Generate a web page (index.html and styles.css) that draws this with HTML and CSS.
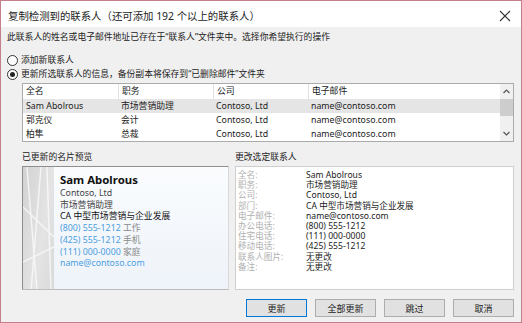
FILE: index.html
```html
<!DOCTYPE html>
<html lang="zh-CN">
<head>
<title>复制检测到的联系人</title>
<meta charset="utf-8">
<link rel="stylesheet" href="styles.css">
</head>
<body>

<div class="dialog">
  <header class="titlebar">
    <span class="title">复制检测到的联系人（还可添加 192 个以上的联系人）</span>
    <svg class="close" width="12" height="12" viewBox="0 0 12 12"><path d="M1 1 L11 11 M11 1 L1 11" stroke="#333" stroke-width="1.1" fill="none"/></svg>
  </header>

  <section class="content">
    <p class="intro">此联系人的姓名或电子邮件地址已存在于“联系人”文件夹中。选择你希望执行的操作</p>

    <label class="radio"><span class="dot"></span>添加新联系人</label>
    <label class="radio checked"><span class="dot"></span>更新所选联系人的信息，备份副本将保存到“已删除邮件”文件夹</label>

    <div class="list">
      <div class="rows">
        <div class="row head">
          <span>全名</span><span>职务</span><span>公司</span><span>电子邮件</span>
        </div>
        <div class="row selected">
          <span>Sam Abolrous</span><span>市场营销助理</span><span>Contoso, Ltd</span><span>name@contoso.com</span>
        </div>
        <div class="row">
          <span>郭克仪</span><span>会计</span><span>Contoso, Ltd</span><span>name@contoso.com</span>
        </div>
        <div class="row">
          <span>柏隼</span><span>总裁</span><span>Contoso, Ltd</span><span>name@contoso.com</span>
        </div>
      </div>
      <div class="scrollbar">
        <svg width="13" height="14" viewBox="0 0 13 14"><path d="M3.5 9 L6.5 6 L9.5 9" stroke="#555" stroke-width="1.2" fill="none"/></svg>
        <div class="thumb"></div>
        <div class="track"></div>
        <svg width="13" height="14" viewBox="0 0 13 14"><path d="M3.5 5 L6.5 8 L9.5 5" stroke="#555" stroke-width="1.2" fill="none"/></svg>
      </div>
    </div>

    <div class="panes">
      <div class="pane">
        <div class="pane-label">已更新的名片预览</div>
        <div class="card">
          <div class="strip">
            <svg width="31" height="124" viewBox="0 0 31 124">
              <path d="M4 0 L14 124 M18 0 L8 124 M0 40 L31 70 M0 95 L31 80 M24 0 L28 124" stroke="#fafafa" stroke-width="1.5" fill="none" opacity="0.8"/>
            </svg>
          </div>
          <div class="card-body">
            <div class="name">Sam Abolrous</div>
            <div>Contoso, Ltd</div>
            <div>市场营销助理</div>
            <div class="dark">CA 中型市场营销与企业发展</div>
            <div><span class="blue">(800) 555-1212</span> <span class="muted">工作</span></div>
            <div><span class="blue">(425) 555-1212</span> <span class="muted">手机</span></div>
            <div><span class="blue">(111) 000-0000</span> <span class="muted">家庭</span></div>
            <div class="blue">name@contoso.com</div>
          </div>
        </div>
      </div>

      <div class="pane">
        <div class="pane-label">更改选定联系人</div>
        <div class="fields">
          <span class="key">全名:</span><span>Sam Abolrous</span>
          <span class="key">职务:</span><span>市场营销助理</span>
          <span class="key">公司:</span><span>Contoso, Ltd</span>
          <span class="key">部门:</span><span>CA 中型市场营销与企业发展</span>
          <span class="key">电子邮件:</span><span>name@contoso.com</span>
          <span class="key">办公电话:</span><span>(800) 555-1212</span>
          <span class="key">住宅电话:</span><span>(111) 000-0000</span>
          <span class="key">移动电话:</span><span>(425) 555-1212</span>
          <span class="key">联系人图片:</span><span>无更改</span>
          <span class="key">备注:</span><span>无更改</span>
        </div>
      </div>
    </div>

    <footer class="buttons">
      <button class="default">更新</button>
      <button>全部更新</button>
      <button>跳过</button>
      <button>取消</button>
    </footer>
  </section>
</div>

</body>
</html>
```

FILE: styles.css
```css
* {
  box-sizing: border-box;
}

body {
  margin: 0;
  font-family: "Noto Sans", "Noto Sans CJK SC", sans-serif;
  color: #222;
}

/* Window frame */
.dialog {
  width: 522px;
  height: 323px;
  border: 1px solid #c4808a;
  background: #f0f0f0;
  display: flex;
  flex-direction: column;
}

.titlebar {
  height: 26px;
  flex: none;
  background: #fff;
  display: flex;
  align-items: center;
  justify-content: space-between;
  padding: 3px 10px 0 7px;
}

.title {
  font-size: 10.4px;
  color: #222;
}

.content {
  padding: 0 7px 0 6px;
  font-size: 8.8px;
}

.intro {
  margin: 3px 0 0 0;
  line-height: 15px;
  color: #222;
}

/* Radio buttons */
.radio {
  display: flex;
  align-items: center;
  height: 14px;
  line-height: 14px;
  color: #222;
}

.radio:first-of-type {
  margin-top: 8px;
}

.dot {
  width: 11px;
  height: 11px;
  border: 1px solid #333;
  border-radius: 50%;
  background: #fff;
  margin-right: 3px;
  position: relative;
}

.checked .dot:after {
  content: "";
  position: absolute;
  left: 2px;
  top: 2px;
  width: 5px;
  height: 5px;
  border-radius: 50%;
  background: #222;
}

/* Contact list */
.list {
  margin: 2px 0 0 15px;
  height: 59px;
  border: 1px solid #ababab;
  background: #fff;
  display: flex;
}

.rows {
  flex: 1;
}

.row {
  display: grid;
  grid-template-columns: 95px 95px 95px 1fr;
  height: 14px;
  line-height: 14px;
  color: #222;
}

.row span {
  padding-left: 3px;
  white-space: nowrap;
  overflow: hidden;
}

.row.head {
  height: 15px;
  line-height: 15px;
}

.row.head span + span {
  border-left: 1px solid #e2e2e2;
}

.row.selected {
  background: #e5e5e5;
}

.scrollbar {
  width: 13px;
  background: #f0f0f0;
  display: flex;
  flex-direction: column;
}

.thumb {
  height: 17px;
  margin: 1px 0;
  background: #cdcdcd;
}

.track {
  flex: 1;
}

/* Preview panes */
.panes {
  display: grid;
  grid-template-columns: 207px 1fr;
  gap: 6px;
  margin: 8px 0 0 15px;
}

.pane-label {
  height: 15px;
  line-height: 15px;
  color: #222;
}

.card {
  margin-top: 1px;
  height: 124px;
  border: 1px solid #8e8e8e;
  border-right-color: #d8d8d8;
  border-bottom-color: #bdbdbd;
  display: flex;
  background: linear-gradient(180deg, #fafcfe, #eef3f9);
}

.strip {
  width: 31px;
  background: linear-gradient(100deg, #d2d2d2, #e4e4e4 60%, #d9d9d9);
  overflow: hidden;
}

.card-body {
  padding: 6px 0 0 6px;
  font-size: 8.8px;
  line-height: 11.7px;
  color: #444;
}

.card-body .name {
  font-size: 11.4px;
  font-weight: bold;
  line-height: 14px;
  color: #111;
  margin-bottom: 1px;
}

.card-body .dark {
  color: #111;
}

.blue {
  color: #4c9ee0;
}

.muted {
  color: #8a8a8a;
}

.fields {
  margin-top: 1px;
  height: 124px;
  border: 1px solid #cfcfcf;
  background: #fff;
  display: grid;
  grid-template-columns: 68px 1fr;
  align-content: start;
  padding: 3px 0 0 2px;
  font-size: 8.6px;
  line-height: 10.2px;
  color: #222;
}

.fields .key {
  color: #b0b0b0;
}

/* Dialog buttons */
.buttons {
  display: flex;
  justify-content: flex-end;
  gap: 8px;
  margin-top: 9px;
}

.buttons button {
  width: 61px;
  height: 18px;
  padding: 0;
  font-family: inherit;
  font-size: 9px;
  color: #222;
  background: #e1e1e1;
  border: 1px solid #adadad;
}

.buttons button.default {
  border: 1px solid #0078d7;
  box-shadow: inset 0 0 0 1px #e1e1e1;
}
```
